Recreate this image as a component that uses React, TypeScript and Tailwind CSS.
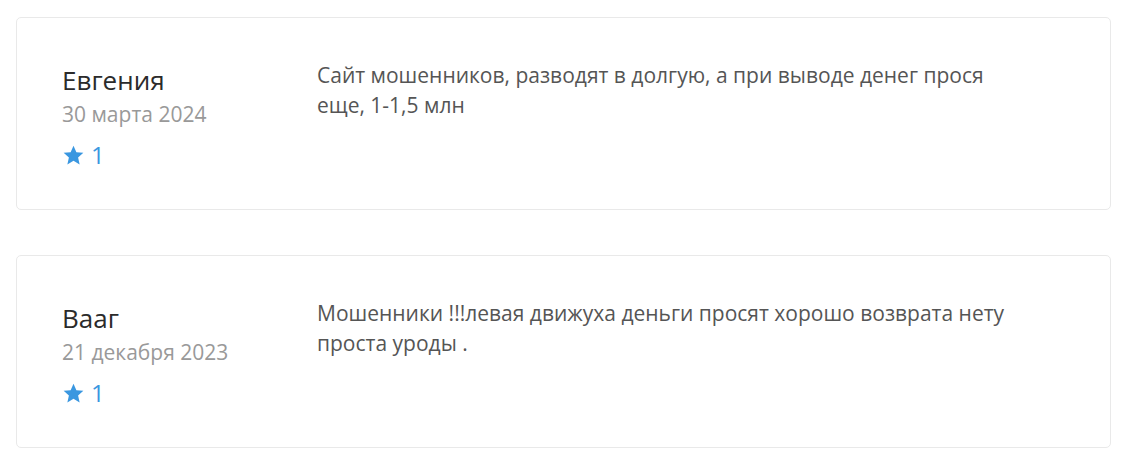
const reviews = [
  {
    name: 'Евгения',
    date: '30 марта 2024',
    rating: 1,
    text: 'Сайт мошенников, разводят в долгую, а при выводе денег прося еще, 1-1,5 млн',
  },
  {
    name: 'Вааг',
    date: '21 декабря 2023',
    rating: 1,
    text: 'Мошенники !!!левая движуха деньги просят хорошо возврата нету проста уроды .',
  },
];

function Star() {
  return (
    <svg viewBox="0 0 24 24" className="h-[23px] w-[23px]" fill="#3a97e0">
      <path d="M12 1.8l3 6.7 7.3.7-5.5 4.9 1.6 7.2L12 17.5l-6.4 3.8 1.6-7.2L1.7 9.2 9 8.5z" />
    </svg>
  );
}

export default function App() {
  return (
    <div className="min-h-screen bg-white pl-4 pr-[13px] pt-[17px] font-['Open_Sans',sans-serif]">
      <div className="flex flex-col gap-[45px]">
        {reviews.map((r) => (
          <div
            key={r.name}
            className="flex h-[193px] rounded-[5px] border border-[#e9e9e9] bg-white pl-[45px] pt-[43px]"
          >
            <div className="w-[255px] shrink-0">
              <div className="text-[26px] leading-[38px] text-[#2b2b2b]">{r.name}</div>
              <div className="text-[21px] leading-[30px] text-[#999]">{r.date}</div>
              <div className="mt-[11px] flex items-center gap-[6px] text-[24px] leading-[30px] text-[#3a97e0]">
                <Star />
                <span>{r.rating}</span>
              </div>
            </div>
            <p className="-mt-px max-w-[700px] text-[21px] leading-[30px] text-[#555]">{r.text}</p>
          </div>
        ))}
      </div>
    </div>
  );
}
